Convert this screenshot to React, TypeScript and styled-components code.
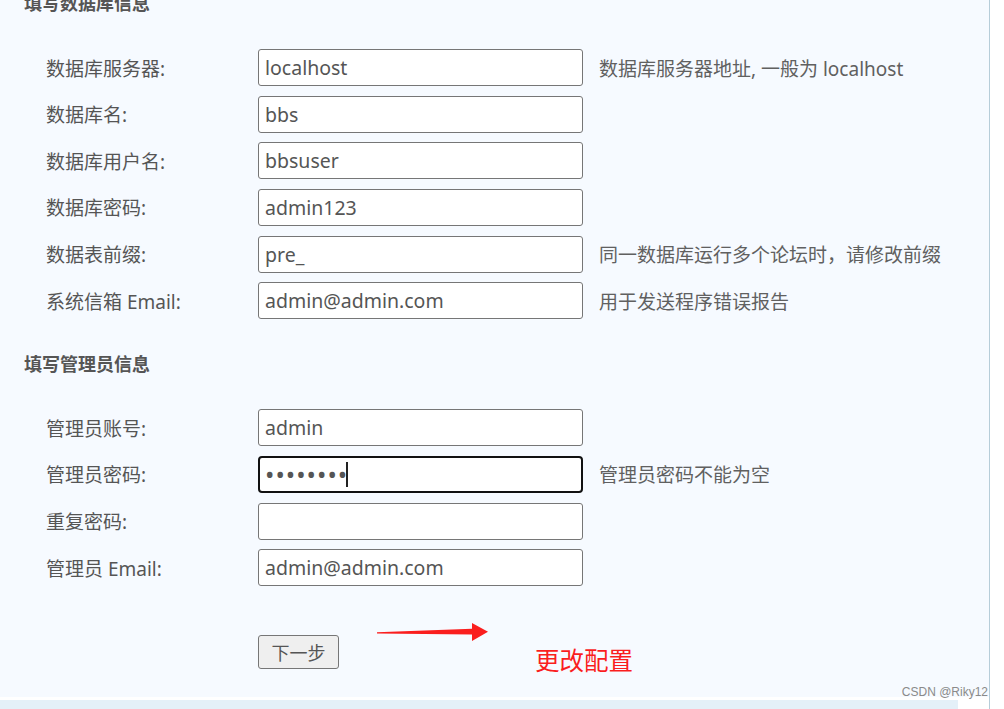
import React from "react";
import styled, { createGlobalStyle } from "styled-components";

const GlobalStyle = createGlobalStyle`
  html, body {
    margin: 0;
    padding: 0;
    background: #ffffff;
  }
  * {
    box-sizing: border-box;
  }
`;

const FONT = `"Noto Sans", "Noto Sans CJK SC", sans-serif`;

type Field = {
  label: string;
  value: string;
  hint?: string;
  type?: string;
  focused?: boolean;
};

const dbFields: Field[] = [
  { label: "数据库服务器:", value: "localhost", hint: "数据库服务器地址, 一般为 localhost" },
  { label: "数据库名:", value: "bbs" },
  { label: "数据库用户名:", value: "bbsuser" },
  { label: "数据库密码:", value: "admin123" },
  { label: "数据表前缀:", value: "pre_", hint: "同一数据库运行多个论坛时，请修改前缀" },
  { label: "系统信箱 Email:", value: "admin@admin.com", hint: "用于发送程序错误报告" },
];

const adminFields: Field[] = [
  { label: "管理员账号:", value: "admin" },
  { label: "管理员密码:", value: "admin123", type: "password", focused: true, hint: "管理员密码不能为空" },
  { label: "重复密码:", value: "", type: "password" },
  { label: "管理员 Email:", value: "admin@admin.com" },
];

const App: React.FC = () => {
  const renderRows = (fields: Field[]) =>
    fields.map((f) => (
      <Row key={f.label}>
        <Label>{f.label}</Label>
        <InputWrap>
          <TextInput
            type={f.type || "text"}
            defaultValue={f.value}
            $focused={f.focused}
            $secret={f.type === "password"}
            readOnly
          />
          {f.focused && <Caret />}
        </InputWrap>
        {f.hint && <Hint>{f.hint}</Hint>}
      </Row>
    ));

  return (
    <>
      <GlobalStyle />
      <Frame>
        <Panel>
          <Content>
            <SectionTitle $first>填写数据库信息</SectionTitle>
            <RowList>{renderRows(dbFields)}</RowList>
            <SectionTitle>填写管理员信息</SectionTitle>
            <RowList>{renderRows(adminFields)}</RowList>
            <ActionBar>
              <NextButton type="button">下一步</NextButton>
              <Arrow width="112" height="20" viewBox="0 0 112 20">
                <polygon
                  points="0,10.2 0,11.6 95,12.4 95,19 111,9.8 95,1 95,6.8"
                  fill="#fa1e1e"
                />
              </Arrow>
              <Note>更改配置</Note>
            </ActionBar>
          </Content>
          <BottomStrip />
        </Panel>
        <Watermark>CSDN @Riky12</Watermark>
      </Frame>
    </>
  );
};

const Frame = styled.div`
  position: relative;
  display: flex;
  height: 709px;
  overflow: hidden;
  background: #ffffff;
`;

const Panel = styled.div`
  width: 990px;
  display: flex;
  flex-direction: column;
  border-right: 1px solid #b6cdd9;
`;

const Content = styled.div`
  height: 697px;
  background: #f6faff;
  padding-left: 24px;
  display: flex;
  flex-direction: column;
`;

const BottomStrip = styled.div`
  width: 958px;
  height: 9px;
  margin-top: 3px;
  background: #e4f0f8;
`;

const SectionTitle = styled.h2<{ $first?: boolean }>`
  margin: ${(p) => (p.$first ? "-9px 0 34px" : "33px 0 33px")};
  font-family: ${FONT};
  font-size: 18px;
  line-height: 24px;
  font-weight: 700;
  color: #555555;
`;

const RowList = styled.div`
  display: flex;
  flex-direction: column;
  gap: 9.67px;
`;

const Row = styled.div`
  display: grid;
  grid-template-columns: 196px 325px auto;
  column-gap: 16px;
  align-items: center;
  padding-left: 22px;
  height: 37px;
`;

const Label = styled.span`
  font-family: ${FONT};
  font-size: 19px;
  color: #555555;
  white-space: nowrap;
`;

const InputWrap = styled.div`
  position: relative;
  height: 37px;
`;

const TextInput = styled.input<{ $focused?: boolean; $secret?: boolean }>`
  width: 100%;
  height: 100%;
  margin: 0;
  padding: 0 6px;
  font-family: ${FONT};
  font-size: ${(p) => (p.$secret ? "25px" : "19.5px")};
  color: #555555;
  background: #ffffff;
  border: ${(p) => (p.$focused ? "2px solid #111111" : "1px solid #767676")};
  border-radius: ${(p) => (p.$focused ? "4px" : "3px")};
  padding-left: ${(p) => (p.$focused ? "5px" : "6px")};
  letter-spacing: ${(p) => (p.$secret ? "1px" : "0")};
  outline: none;
`;

const Caret = styled.span`
  position: absolute;
  left: 88px;
  top: 6px;
  width: 1.5px;
  height: 25px;
  background: #222222;
`;

const Hint = styled.span`
  font-family: ${FONT};
  font-size: 19px;
  color: #606060;
  white-space: nowrap;
`;

const ActionBar = styled.div`
  display: flex;
  align-items: flex-start;
  margin-top: 49px;
  padding-left: 234px;
`;

const NextButton = styled.button`
  width: 81px;
  height: 34px;
  padding: 0;
  font-family: ${FONT};
  font-size: 18px;
  color: #555555;
  background: #efefef;
  border: 1px solid #767676;
  border-radius: 3px;
`;

const Arrow = styled.svg`
  display: block;
  margin-left: 38px;
  margin-top: -13px;
`;

const Note = styled.span`
  margin-left: 46px;
  margin-top: 11px;
  font-family: ${FONT};
  font-size: 24.5px;
  line-height: 30px;
  color: #fa1e1e;
`;

const Watermark = styled.span`
  position: absolute;
  right: 16px;
  bottom: 10px;
  font-family: "Liberation Sans", sans-serif;
  font-size: 12px;
  color: #8a8a8a;
`;

export default App;
